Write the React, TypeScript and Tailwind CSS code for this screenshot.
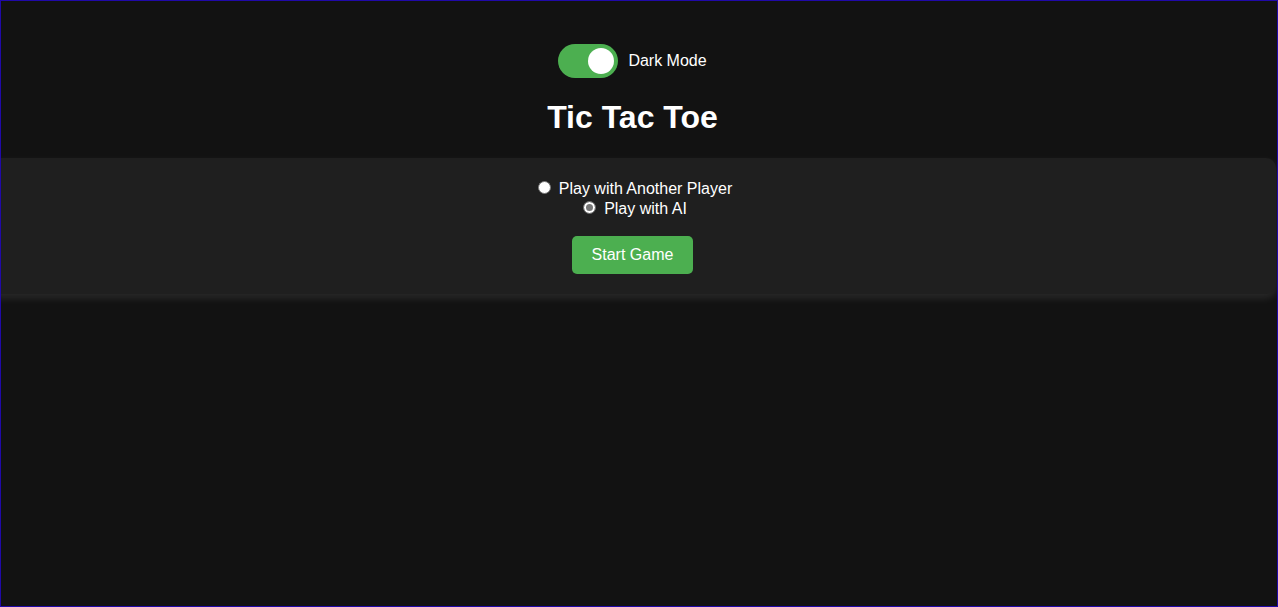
import { useState } from "react";

const radioClass =
  "mt-0.5 size-[13px] appearance-none rounded-full border border-[#767676] bg-white checked:bg-[#767676] checked:shadow-[inset_0_0_0_2px_white]";

export default function App() {
  const [dark, setDark] = useState(true);
  const [mode, setMode] = useState("ai");

  return (
    <div
      className={`min-h-screen overflow-hidden border border-[#2009a8] pr-px font-['Liberation_Sans',Arial,sans-serif] text-base ${
        dark ? "bg-[#121212] text-white" : "bg-white text-black"
      }`}
    >
      <main className="-ml-3 flex flex-col items-center pt-[43px]">
        <label className="flex cursor-pointer items-center gap-[10px]">
          <input
            type="checkbox"
            role="switch"
            className="peer sr-only"
            checked={dark}
            onChange={(e) => setDark(e.target.checked)}
          />
          <span className="flex h-[34px] w-[60px] items-center rounded-full bg-[#ccc] p-1 peer-checked:justify-end peer-checked:bg-[#4caf50]">
            <span className="size-[26px] rounded-full bg-white" />
          </span>
          <span>Dark Mode</span>
        </label>

        <h1 className="mt-5 mb-[22px] text-[32px] leading-[38px] font-bold">Tic Tac Toe</h1>

        <section
          className={`flex w-full flex-col items-center rounded-[10px] px-5 pt-[21px] pb-5 ${
            dark
              ? "bg-[#1f1f1f] shadow-[0_4px_8px_rgba(255,255,255,0.1)]"
              : "bg-gray-100 shadow-[0_4px_8px_rgba(0,0,0,0.1)]"
          }`}
        >
          <label className="flex items-start gap-2 pl-[5px] leading-5">
            <input
              type="radio"
              name="mode"
              value="player"
              className={radioClass}
              checked={mode === "player"}
              onChange={() => setMode("player")}
            />
            Play with Another Player
          </label>
          <label className="flex items-start gap-2 pl-[5px] leading-5">
            <input
              type="radio"
              name="mode"
              value="ai"
              className={radioClass}
              checked={mode === "ai"}
              onChange={() => setMode("ai")}
            />
            Play with AI
          </label>
          <button
            type="button"
            className="mt-[17px] cursor-pointer rounded-[5px] bg-[#4caf50] px-5 py-[10px] leading-[18px] text-white"
          >
            Start Game
          </button>
        </section>
      </main>
    </div>
  );
}
